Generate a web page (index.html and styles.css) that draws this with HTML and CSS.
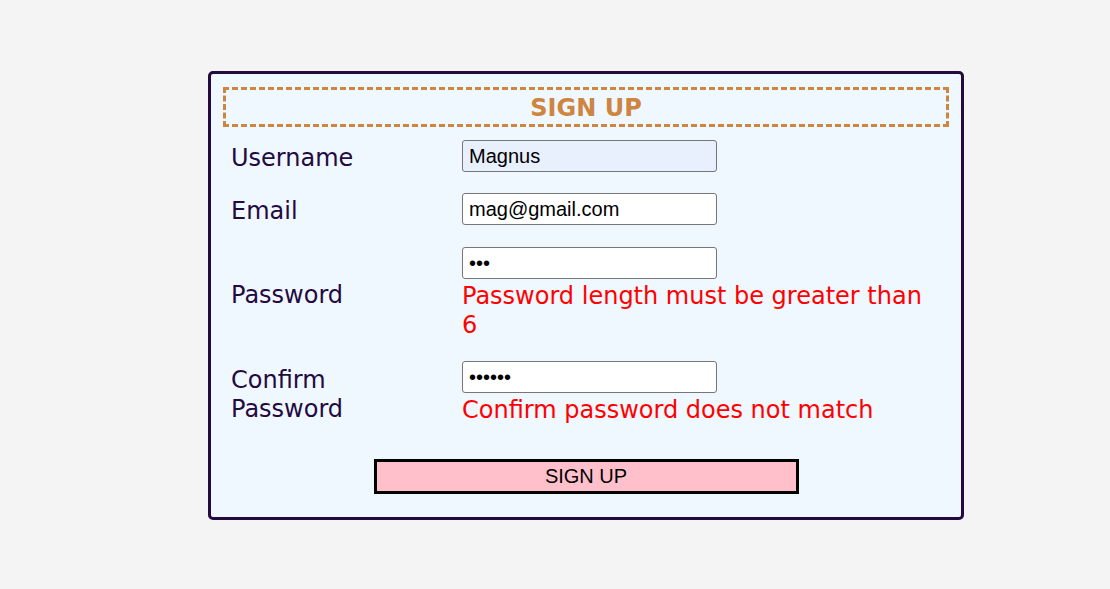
FILE: index.html
```html
<!DOCTYPE html>
<html>
<head>
<meta charset="utf-8">
<title>Sign Up</title>
<link rel="stylesheet" href="styles.css">
</head>
<body>
<form class="card">
  <h2 class="title">SIGN UP</h2>
  <div class="grid">
    <label class="label">Username</label>
    <div class="field"><input class="input autofill" type="text" value="Magnus"></div>

    <label class="label">Email</label>
    <div class="field"><input class="input" type="text" value="mag@gmail.com"></div>

    <label class="label">Password</label>
    <div class="field field-pw">
      <input class="input" type="password" value="abc">
      <div class="error">Password length must be greater than 6</div>
    </div>

    <label class="label">Confirm Password</label>
    <div class="field">
      <input class="input" type="password" value="abcdef">
      <div class="error">Confirm password does not match</div>
    </div>
  </div>
  <div class="actions"><button class="btn" type="button">SIGN UP</button></div>
</form>
</body>
</html>
```
FILE: styles.css
```css
html, body {
  margin: 0;
  padding: 0;
  background: #f4f4f4;
}
body {
  font-family: "DejaVu Sans", Verdana, sans-serif;
}
.card {
  box-sizing: border-box;
  width: 756px;
  margin: 71px 0 0 208px;
  background: #f0f8ff;
  border: 3px solid #240a3f;
  border-radius: 5px;
  padding: 13px 12px 23px;
}
.title {
  margin: 0;
  box-sizing: border-box;
  height: 40px;
  border: 3px dashed #cd853f;
  color: #cd853f;
  font-size: 24px;
  font-weight: bold;
  text-align: center;
  line-height: 34px;
  padding-top: 1px;
}
.grid {
  display: grid;
  grid-template-columns: 231px 478px;
  row-gap: 21px;
  margin-top: 13px;
  padding-left: 8px;
}
.label {
  align-self: center;
  color: #240a3f;
  font-size: 24px;
  line-height: 29px;
  width: 130px;
  padding-top: 2px;
  margin-bottom: -2px;
}
.field {
  display: flex;
  flex-direction: column;
  align-items: flex-start;
}
.field-pw {
  margin-top: 1px;
}
.input {
  box-sizing: border-box;
  width: 255px;
  height: 32px;
  border: 1px solid #767676;
  border-radius: 3px;
  background: #ffffff;
  padding: 0 6px;
  font-family: "Liberation Sans", Arial, sans-serif;
  font-size: 20px;
  color: #000;
  outline: none;
}
.input.autofill {
  background: #e8f0fe;
}
.error {
  color: #ff0000;
  font-size: 24px;
  line-height: 29px;
  margin-top: 3px;
}
.actions {
  display: flex;
  justify-content: center;
  margin-top: 34px;
}
.btn {
  box-sizing: border-box;
  width: 425px;
  height: 35px;
  background: #ffc0cb;
  border: 3px solid #000;
  font-family: "Liberation Sans", Arial, sans-serif;
  font-size: 20px;
  color: #000;
  padding: 0;
}
```
